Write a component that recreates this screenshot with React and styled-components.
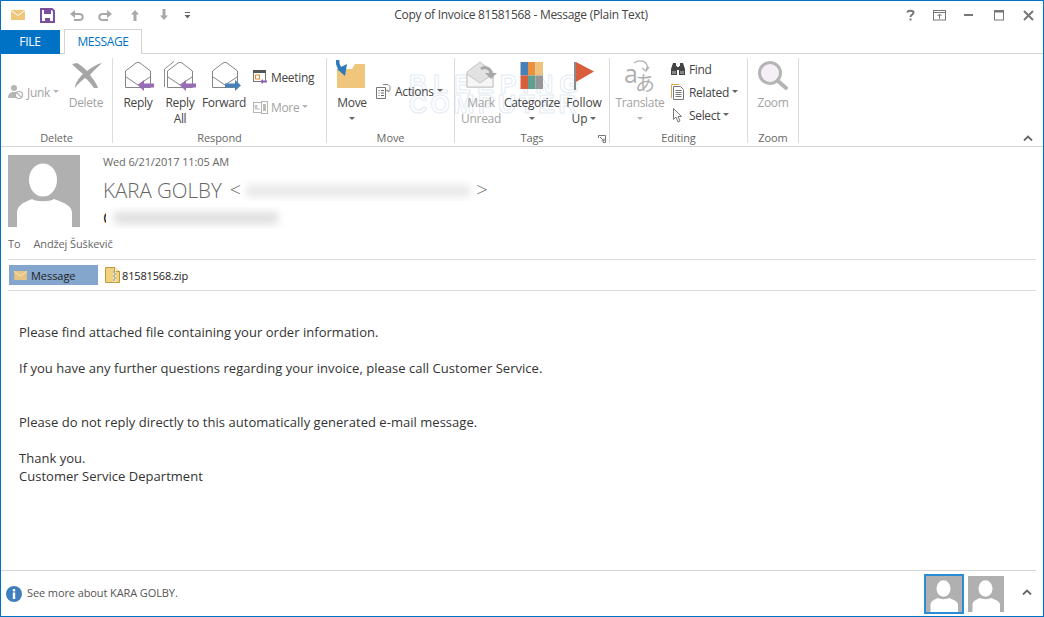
import React from "react";
import styled, { createGlobalStyle } from "styled-components";

const Global = createGlobalStyle`
  html, body { margin: 0; padding: 0; background: #fff; }
  body { font-family: "Open Sans", "Noto Sans", sans-serif; color: #444; }
  * { box-sizing: border-box; }
`;

const Win = styled.div`
  width: 1044px; height: 617px; border: 1px solid #0072c6;
  display: flex; flex-direction: column; overflow: hidden; background: #fff;
`;
const TitleBar = styled.div`
  height: 28px; flex: none; display: flex; align-items: center; position: relative;
`;
const Qat = styled.div`
  display: flex; align-items: center; padding-left: 10px;
`;
const QatBtn = styled.div`
  width: ${p => p.$w || 29}px; height: 16px; display: flex; align-items: center;
`;
const Title = styled.div`
  position: absolute; left: 0; right: 0; top: 6px; text-align: center; margin-left: -2px;
  font-size: 12px; line-height: 16px; color: #444; letter-spacing: -0.28px; pointer-events: none;
`;
const WinCtl = styled.div`
  margin-left: auto; display: flex; align-items: center;
`;
const CtlBtn = styled.div`
  width: 29.5px; height: 16px; display: flex; align-items: center; justify-content: center;
`;
const TabBar = styled.div`
  height: 25px; flex: none; display: flex; align-items: flex-end; border-bottom: 1px solid #d4d4d4; margin-left: -1px;
`;
const FileTab = styled.div`
  width: 60px; height: 24px; margin-bottom: -1px; background: #0072c6; color: #fff; font-size: 12px; line-height: 24px;
  text-align: center; letter-spacing: -0.2px;
`;
const MsgTab = styled.div`
  width: 78px; height: 25px; margin-left: 4px; margin-bottom: -1px; background: #fff; color: #0072c6;
  border: 1px solid #d4d4d4; border-bottom: 0; font-size: 12px; line-height: 24px; text-align: center; letter-spacing: -0.35px;
`;
const Ribbon = styled.div`
  height: 93px; flex: none; display: flex; position: relative; border-bottom: 1px solid #d4d4d4; padding-top: 4px;
`;
const Watermark = styled.div`
  position: absolute; left: 408px; top: 20px; font-family: "Liberation Sans", sans-serif; font-weight: 700;
  font-size: 25px; line-height: 20px; color: transparent; -webkit-text-stroke: 1px #e3ebf4; z-index: 0; white-space: nowrap;
  display: flex; flex-direction: column;
`;
const WatermarkLine = styled.span`
  letter-spacing: ${p => p.$ls}px;
`;
const Group = styled.div`
  width: ${p => p.$w}px; flex: none; height: 85px; position: relative; display: flex; flex-direction: column; z-index: 1;
  border-right: 1px solid #dcdcdc;
`;
const GroupBody = styled.div`
  flex: 1; display: flex; padding-left: ${p => p.$pl || 0}px; min-height: 0;
`;
const GroupLabel = styled.div`
  height: 16px; margin-bottom: -3px; flex: none; font-size: 11px; line-height: 16px; color: #666; text-align: center; letter-spacing: -0.1px;
`;
const Launcher = styled.div`
  position: absolute; right: 3px; bottom: 0; width: 8px; height: 8px; display: flex;
`;
const BigBtn = styled.div`
  width: ${p => p.$w}px; margin-left: ${p => p.$ml || 0}px; flex: none; display: flex; flex-direction: column; align-items: center;
  padding-top: 2px; font-size: 12px; line-height: 16px; letter-spacing: ${p => p.$ls ?? -0.33}px; text-align: center; white-space: nowrap;
  color: ${p => (p.$off ? "#a3a3a3" : "#444")};
`;
const BigIcon = styled.div`
  height: 34px; width: 100%; display: flex; justify-content: center; flex: none; margin-bottom: 1px;
`;
const BigLabel = styled.span`
  display: block;
`;
const CaretLine = styled.div`
  height: 16px; display: flex; align-items: center; justify-content: center;
`;
const Caret = styled.span`
  display: inline-block; width: 0; height: 0; border-left: 3px solid transparent; border-right: 3px solid transparent;
  border-top: 3px solid ${p => (p.$off ? "#b5b5b5" : "#666")}; margin-left: ${p => p.$ml ?? 3}px; vertical-align: middle; position: relative; top: -1px;
`;
const Stack = styled.div`
  display: flex; flex-direction: column; margin-left: ${p => p.$ml || 0}px; padding-top: ${p => p.$pt || 0}px; gap: ${p => p.$gap || 0}px; flex: none;
`;
const SmallBtn = styled.div`
  height: 16px; display: flex; align-items: center; font-size: 12px; letter-spacing: -0.33px; white-space: nowrap;
  color: ${p => (p.$off ? "#a3a3a3" : "#444")};
`;
const SmallIcon = styled.span`
  width: ${p => p.$w || 18}px; height: 16px; flex: none; display: flex; align-items: center; margin-right: ${p => p.$mr || 1}px;
`;
const Collapse = styled.div`
  position: absolute; right: 10px; bottom: 5px; width: 10px; height: 6px; display: flex;
`;
const Header = styled.div`
  flex: none; padding: 8px 7px 0 7px;
`;
const Top = styled.div`
  display: flex;
`;
const AvatarBox = styled.div`
  width: ${p => p.$s}px; height: ${p => p.$s}px; flex: none; background: #b0b0b0; overflow: hidden; display: flex;
`;
const Meta = styled.div`
  margin-left: 23px; display: flex; flex-direction: column; min-width: 0;
`;
const DateLine = styled.div`
  font-size: 11px; line-height: 14px; color: #666; letter-spacing: -0.12px;
`;
const NameRow = styled.div`
  margin-top: 7px; height: 28px; display: flex; align-items: center; font-size: 20.5px; line-height: 28px; color: #666; font-weight: 300; letter-spacing: 0;
`;
const Angle = styled.span`
  font-size: 20px; margin-left: ${p => p.$ml}px; color: #666;
`;
const BlurBox = styled.span`
  display: block; width: ${p => p.$w}px; height: ${p => p.$h}px; flex: none; margin-left: ${p => p.$ml || 0}px;
  background: #fff; overflow: hidden; position: relative;
`;
const BlurInk = styled.span`
  position: absolute; left: ${p => p.$l}px; right: ${p => p.$r}px; top: ${p => p.$t}px; height: ${p => p.$ih}px;
  background: ${p => p.$c}; filter: blur(4px);
`;
const SubjectRow = styled.div`
  margin-top: 3px; height: 22px; display: flex; align-items: center; font-size: 16px; color: #222;
`;
const ToRow = styled.div`
  margin-top: 8px; height: 14px; display: flex; font-size: 11px; line-height: 14px; color: #666; letter-spacing: -0.12px;
`;
const ToName = styled.span`
  margin-left: 13px;
`;
const Rule = styled.div`
  height: 1px; background: #dcdcdc; margin-top: ${p => p.$mt || 0}px;
`;
const AttachRow = styled.div`
  height: 30px; display: flex; align-items: center; padding-left: 1px;
`;
const MsgChip = styled.div`
  width: 89px; height: 20px; background: #84a6cc; display: flex; align-items: center; padding-left: 5px; font-size: 11px; color: #1f1f1f; letter-spacing: -0.05px;
`;
const ChipIcon = styled.span`
  display: flex; width: 13px; margin-right: 4px; flex: none;
`;
const Attachment = styled.div`
  display: flex; align-items: center; margin-left: 7px; font-size: 11px; color: #222; letter-spacing: -0.15px;
`;
const AttachIcon = styled.span`
  display: flex; margin-right: 2px;
`;
const Body = styled.div`
  flex: 1; min-height: 0; padding: 32px 0 0 18px; font-size: 13px; line-height: 18px; color: #333; letter-spacing: 0.03px;
`;
const Para = styled.p`
  margin: 0 0 ${p => p.$after ?? 18}px;
`;
const Footer = styled.div`
  height: 46px; flex: none; margin-left: -1px; margin-right: 7px; border-top: 1px solid #d4d4d4; display: flex; align-items: center; padding-left: 6px; position: relative;
`;
const FooterText = styled.div`
  margin: -2px 0 0 5px; font-size: 11px; color: #555; letter-spacing: -0.1px;
`;
const People = styled.div`
  margin-left: auto; display: flex; align-items: center; margin-right: 32px; gap: 4px;
`;
const Selected = styled.div`
  width: 40px; height: 40px; border: 2px solid #2a8dd4; display: flex;
`;
const FooterChevron = styled.div`
  position: absolute; right: 4px; top: 18px; width: 10px; height: 6px; display: flex;
`;

const Person = ({ s = 72 }) => (
  <AvatarBox $s={s}>
    <svg width={s} height={s} viewBox="0 0 72 72">
      <rect width="72" height="72" fill="#b0b0b0" />
      <ellipse cx="35" cy="25" rx="14" ry="16.5" fill="#fff" />
      <path d="M9 72V58c0-7 5-10 15-14 4 3 18 3 22 0 11 4 18 7 18 14v14z" fill="#fff" />
    </svg>
  </AvatarBox>
);

const Env = ({ x = 4, stroke = "#858585" }) => (
  <g fill="none" stroke={stroke} strokeWidth="1">
    <path d={`M${x + .5} 11 L${x + 11} 3 Q${x + 13} 1.500 ${x + 15} 3 L${x + 25.500} 11 V27.500 H${x + .5} Z`} fill="#fff" />
    <path d={`M${x + 1} 17 L${x + 13} 25 L${x + 25} 17`} />
  </g>
);
const ArrowL = ({ x, c = "#9a6cb8" }) => (
  <path d={`M${x} 25.500 l6 -5.500 v3.500 h10 v4 h-10 v3.500z`} fill={c} />
);

const ReplyIcon = () => (
  <svg width="34" height="34" viewBox="0 0 34 34"><Env /><ArrowL x={17} /></svg>
);
const ReplyAllIcon = () => (
  <svg width="34" height="34" viewBox="0 0 34 34">
    <path d="M1.500 27V9L11 1.500" fill="none" stroke="#8f8f8f" />
    <Env x={4} /><ArrowL x={17} />
  </svg>
);
const ForwardIcon = () => (
  <svg width="34" height="34" viewBox="0 0 34 34">
    <Env x={5} />
    <path d="M34 25.500 l-6 -5.500 v3.500 h-10 v4 h10 v3.500z" fill="#4a80b8" />
  </svg>
);
const DeleteIcon = () => (
  <svg width="34" height="34" viewBox="0 0 34 34">
    <path d="M3 4l5-1c4 2 7 5 10 8 5-4 10-7 15-8-4 4-9 8-12 12 3 4 7 9 8 13h-4c-3-4-6-8-9-10-4 3-8 7-10 10 0-5 4-10 8-14C10 11 6 7 3 4z" fill="#a6a6a6" />
  </svg>
);
const JunkIcon = () => (
  <svg width="18" height="16" viewBox="0 0 18 16">
    <circle cx="7" cy="4" r="3" fill="#b5b5b5" />
    <path d="M1 14c0-4 2-6 6-6s5 1 5 3l-2 3z" fill="#b5b5b5" />
    <circle cx="12" cy="11" r="3.500" fill="#fff" stroke="#b0b0b0" strokeWidth="1.200" />
    <path d="M9.700 8.700l4.600 4.600" stroke="#b0b0b0" strokeWidth="1.200" />
  </svg>
);
const MeetingIcon = () => (
  <svg width="16" height="16" viewBox="0 0 16 16">
    <rect x="1.500" y="1.500" width="12" height="11" fill="#fff" stroke="#777" />
    <rect x="1" y="1" width="13" height="3" fill="#555" />
    <rect x="3.500" y="6" width="4" height="4" fill="#fff" stroke="#e08a36" />
    <path d="M8 12.500l3-2.500v1.500h4v2h-4v1.500z" fill="#8e5fb0" />
  </svg>
);
const MoreIcon = () => (
  <svg width="17" height="16" viewBox="0 0 17 16" fill="none" stroke="#b5b5b5">
    <rect x="1.500" y="3.500" width="9" height="10" fill="#fff" />
    <path d="M3 6.500h2v2H3zM3 10h5" />
    <rect x="9.500" y="2.500" width="6" height="12" fill="#fff" />
    <rect x="11" y="5" width="3" height="7" fill="#bbb" stroke="none" />
  </svg>
);
const MoveIcon = () => (
  <svg width="32" height="34" viewBox="0 0 32 34">
    <path d="M1 28V9h15l3-5h10v24z" fill="#efc67c" />
    <path d="M1.500 0c0 5 1 8 4.500 9.500" fill="none" stroke="#2f79bd" strokeWidth="3.600" />
    <path d="M1 9l10-5-2 12z" fill="#2f79bd" />
  </svg>
);
const ActionsIcon = () => (
  <svg width="17" height="17" viewBox="0 0 17 17" fill="none" stroke="#777">
    <path d="M1.500 4.500h9v11h-9z" fill="#fff" />
    <path d="M3.500 7.500h1M6 7.500h3M3.500 10h1M6 10h3M3.500 12.500h1M6 12.500h3" stroke="#666" />
    <path d="M8 1.500h5l2 2v4l-2 1.500V7l-2 .5" stroke="#888" />
  </svg>
);
const UnreadIcon = () => (
  <svg width="34" height="34" viewBox="0 0 34 34">
    <path d="M3 12L16 2l13 10v15H3z" fill="#e2e2e2" stroke="#c4c4c4" />
    <path d="M3 14l13 9 13-9v13H3z" fill="#f6f6f6" stroke="#c4c4c4" />
    <path d="M17 9c4-3 10-1 10 5" fill="none" stroke="#a8a8a8" strokeWidth="3" />
    <path d="M21 13h12l-6 6z" fill="#a8a8a8" />
  </svg>
);
const CategorizeIcon = () => (
  <svg width="24" height="34" viewBox="0 0 24 34">
    <rect x="0.500" y="2" width="7.500" height="13.500" fill="#4a80b8" />
    <rect x="8" y="2" width="7.500" height="13.500" fill="#e8913f" />
    <rect x="15.500" y="2" width="7.500" height="13.500" fill="#eec27c" />
    <rect x="0.500" y="15.500" width="7.500" height="13.500" fill="#d95f3c" />
    <rect x="8" y="15.500" width="7.500" height="13.500" fill="#5f9e90" />
    <rect x="15.500" y="15.500" width="7.500" height="13.500" fill="#969696" />
  </svg>
);
const FlagIcon = () => (
  <svg width="22" height="34" viewBox="0 0 22 34">
    <rect x="1" y="2" width="2" height="28" fill="#8a8a8a" />
    <path d="M3 2l18 9.500L3 22z" fill="#d95f3c" />
  </svg>
);
const TranslateIcon = () => (
  <svg width="34" height="36" viewBox="0 0 34 36" overflow="visible">
    <text x="1" y="23" fontSize="25" fill="#b0b0b0" fontFamily="'Open Sans', sans-serif">a</text>
    <text x="12" y="31" fontSize="20" fill="#b0b0b0" fontFamily="'Noto Sans CJK JP', sans-serif">あ</text>
    <path d="M11 3c4-3 11-3 13 2 1 2 0 4-1 5" fill="none" stroke="#b5b5b5" strokeWidth="1.300" />
    <path d="M19 8l4 3 3-4" fill="none" stroke="#b5b5b5" strokeWidth="1.300" />
  </svg>
);
const FindIcon = () => (
  <svg width="16" height="14" viewBox="0 0 16 14" fill="#444">
    <path d="M3 1h3v3h1v9H1V7zM10 1h3l2 6v6H9V4h1z" />
    <rect x="7" y="5" width="2" height="3" />
    <rect x="2" y="9" width="4" height="3" fill="#888" />
    <rect x="10" y="9" width="4" height="3" fill="#888" />
  </svg>
);
const RelatedIcon = () => (
  <svg width="15" height="16" viewBox="0 0 15 16" fill="none">
    <path d="M1.500 14V.5h8" stroke="#e3a450" />
    <path d="M3.500 2.500h7l3 3v10h-10z" fill="#fff" stroke="#777" />
    <path d="M5.500 6.500h6M5.500 8.500h6M5.500 10.500h6M5.500 12.500h6" stroke="#777" />
  </svg>
);
const SelectIcon = () => (
  <svg width="14" height="17" viewBox="0 0 14 17">
    <path d="M3.500 1.500v11l2.500-2.500 2 5 2-1-2-4.500h3.500z" fill="#fff" stroke="#777" />
  </svg>
);
const ZoomIcon = () => (
  <svg width="32" height="34" viewBox="0 0 32 34">
    <circle cx="13" cy="13" r="10.500" fill="#f4f0f6" stroke="#b5b5b5" strokeWidth="3" />
    <path d="M21 21l8 7" stroke="#b5b5b5" strokeWidth="4" strokeLinecap="round" />
  </svg>
);
const Chevron = () => (
  <svg width="10" height="6" viewBox="0 0 10 6"><path d="M1 5.500l4-4 4 4" fill="none" stroke="#666" strokeWidth="1.800" /></svg>
);
const MailSmall = ({ w = 14, h = 10, c = "#efc67c", line = "#fff" }) => (
  <svg width={w} height={h} viewBox="0 0 14 10">
    <rect width="14" height="10" fill={c} />
    <path d="M0 .5l7 5 7-5" fill="none" stroke={line} />
  </svg>
);
const Zip = () => (
  <svg width="15" height="16" viewBox="0 0 15 16">
    <path d="M.5.500h9l5 4v11H.5z" fill="#f1d27e" stroke="#b99a3c" />
    <path d="M9.500.5v4h5" fill="#fff7d8" stroke="#b99a3c" />
    <rect x="8" y="4" width="3" height="11" fill="#fff" opacity=".6" />
    <path d="M8 5h2M9 7h2M8 9h2M9 11h2M8 13h2" stroke="#777" />
  </svg>
);
const Info = () => (
  <svg width="16" height="16" viewBox="0 0 16 16">
    <circle cx="8" cy="8" r="8" fill="#3f7fbe" />
    <rect x="6.800" y="3" width="2.400" height="2.400" fill="#fff" />
    <rect x="6.800" y="6.500" width="2.400" height="6.500" fill="#fff" />
  </svg>
);

export default function App() {
  return (
    <>
      <Global />
      <Win>
        <TitleBar>
          <Qat>
            <QatBtn><MailSmall w={14} h={10} /></QatBtn>
            <QatBtn>
              <svg width="15" height="15" viewBox="0 0 15 15">
                <path d="M1 1h11l2 2v11H1z" fill="none" stroke="#7c4f9e" strokeWidth="2" />
                <rect x="4" y="2" width="7" height="4" fill="#7c4f9e" />
                <rect x="5" y="10" width="5" height="4" fill="#7c4f9e" />
              </svg>
            </QatBtn>
            <QatBtn>
              <svg width="15" height="13" viewBox="0 0 15 13">
                <path d="M4 5h6c5 0 5 6 0 6H5" fill="none" stroke="#a8a8a8" strokeWidth="2" />
                <path d="M1 5l5-4v8z" fill="#a8a8a8" />
              </svg>
            </QatBtn>
            <QatBtn $w={32}>
              <svg width="15" height="13" viewBox="0 0 15 13">
                <path d="M11 5H5c-5 0-5 6 0 6h5" fill="none" stroke="#a8a8a8" strokeWidth="2" />
                <path d="M14 5L9 1v8z" fill="#a8a8a8" />
              </svg>
            </QatBtn>
            <QatBtn>
              <svg width="10" height="12" viewBox="0 0 10 12"><path d="M5 1L1 5.500h2.500V12h3V5.500H9z" fill="#a8a8a8" /></svg>
            </QatBtn>
            <QatBtn $w={25}>
              <svg width="10" height="12" viewBox="0 0 10 12"><path d="M5 11L1 6.500h2.500V0h3v6.500H9z" fill="#a8a8a8" /></svg>
            </QatBtn>
            <QatBtn>
              <svg width="7" height="7" viewBox="0 0 7 7"><path d="M1 .5h5" stroke="#666" /><path d="M.5 3h6L3.500 6.500z" fill="#666" /></svg>
            </QatBtn>
          </Qat>
          <Title>Copy of Invoice 81581568 - Message (Plain Text)</Title>
          <WinCtl>
            <CtlBtn>
              <svg width="9" height="12" viewBox="0 0 9 12"><path d="M1.500 3.500C1.500 1 7.500 1 7.500 3.500c0 2.500-3 2-3 4.500" fill="none" stroke="#777" strokeWidth="2" /><rect x="3.500" y="9.500" width="2" height="2" fill="#777" /></svg>
            </CtlBtn>
            <CtlBtn>
              <svg width="13" height="11" viewBox="0 0 13 11" fill="none" stroke="#777"><rect x=".5" y=".5" width="12" height="9.500" /><path d="M.5 2.500h12" /><path d="M6.500 9V4M4.500 6l2-2 2 2" /></svg>
            </CtlBtn>
            <CtlBtn>
              <svg width="10" height="2" viewBox="0 0 10 2"><rect width="9" height="2" fill="#777" /></svg>
            </CtlBtn>
            <CtlBtn>
              <svg width="10" height="11" viewBox="0 0 10 11" fill="none" stroke="#777"><rect x=".5" y=".5" width="9" height="9.500" /><rect x="0" y="0" width="10" height="2.500" fill="#777" stroke="none" /></svg>
            </CtlBtn>
            <CtlBtn>
              <svg width="11" height="11" viewBox="0 0 11 11"><path d="M1 1l9 9M10 1l-9 9" stroke="#777" strokeWidth="2" /></svg>
            </CtlBtn>
          </WinCtl>
        </TitleBar>
        <TabBar>
          <FileTab>FILE</FileTab>
          <MsgTab>MESSAGE</MsgTab>
        </TabBar>
        <Ribbon>
          <Watermark>
            <WatermarkLine $ls={6}>BLEEPING</WatermarkLine>
            <WatermarkLine $ls={3.5}>COMPUTER</WatermarkLine>
          </Watermark>
          <Group $w={112}>
            <GroupBody $pl={6}>
              <Stack $pt={26}>
                <SmallBtn $off><SmallIcon $w={19}><JunkIcon /></SmallIcon>Junk<Caret $off /></SmallBtn>
              </Stack>
              <BigBtn $w={34} $ml={10} $off><BigIcon><DeleteIcon /></BigIcon>Delete</BigBtn>
            </GroupBody>
            <GroupLabel>Delete</GroupLabel>
          </Group>
          <Group $w={214}>
            <GroupBody $pl={6}>
              <BigBtn $w={38}><BigIcon><ReplyIcon /></BigIcon><BigLabel>Reply</BigLabel></BigBtn>
              <BigBtn $w={46}><BigIcon><ReplyAllIcon /></BigIcon><BigLabel>Reply<br />All</BigLabel></BigBtn>
              <BigBtn $w={42}><BigIcon><ForwardIcon /></BigIcon><BigLabel>Forward</BigLabel></BigBtn>
              <Stack $ml={7} $pt={11} $gap={14}>
                <SmallBtn><SmallIcon $w={18}><MeetingIcon /></SmallIcon>Meeting</SmallBtn>
                <SmallBtn $off><SmallIcon $w={18}><MoreIcon /></SmallIcon>More<Caret $off /></SmallBtn>
              </Stack>
            </GroupBody>
            <GroupLabel>Respond</GroupLabel>
          </Group>
          <Group $w={128}>
            <GroupBody $pl={8}>
              <BigBtn $w={34}><BigIcon><MoveIcon /></BigIcon><BigLabel>Move</BigLabel><CaretLine><Caret $ml={0} /></CaretLine></BigBtn>
              <Stack $ml={6} $pt={25}>
                <SmallBtn><SmallIcon $w={19}><ActionsIcon /></SmallIcon>Actions<Caret /></SmallBtn>
              </Stack>
            </GroupBody>
            <GroupLabel>Move</GroupLabel>
          </Group>
          <Group $w={155}>
            <GroupBody $pl={5}>
              <BigBtn $w={42} $off><BigIcon><UnreadIcon /></BigIcon><BigLabel>Mark<br />Unread</BigLabel></BigBtn>
              <BigBtn $w={60}><BigIcon><CategorizeIcon /></BigIcon><BigLabel>Categorize</BigLabel><CaretLine><Caret $ml={0} /></CaretLine></BigBtn>
              <BigBtn $w={38} $ml={3} $ls={-0.05}><BigIcon><FlagIcon /></BigIcon><BigLabel>Follow<br />Up<Caret /></BigLabel></BigBtn>
            </GroupBody>
            <GroupLabel>Tags</GroupLabel>
            <Launcher>
              <svg width="8" height="8" viewBox="0 0 8 8" fill="none" stroke="#777"><path d="M.5 3V.5H7.500V7.500H5" /><path d="M2 2l4 4M3.500 6H6V3.500" /></svg>
            </Launcher>
          </Group>
          <Group $w={138}>
            <GroupBody $pl={5}>
              <BigBtn $w={50} $off><BigIcon><TranslateIcon /></BigIcon><BigLabel>Translate</BigLabel><CaretLine><Caret $off $ml={0} /></CaretLine></BigBtn>
              <Stack $ml={5} $pt={3} $gap={7}>
                <SmallBtn><SmallIcon $w={18}><FindIcon /></SmallIcon>Find</SmallBtn>
                <SmallBtn><SmallIcon $w={18}><RelatedIcon /></SmallIcon>Related<Caret /></SmallBtn>
                <SmallBtn><SmallIcon $w={18}><SelectIcon /></SmallIcon>Select<Caret /></SmallBtn>
              </Stack>
            </GroupBody>
            <GroupLabel>Editing</GroupLabel>
          </Group>
          <Group $w={51}>
            <GroupBody $pl={8}>
              <BigBtn $w={34} $off><BigIcon><ZoomIcon /></BigIcon><BigLabel>Zoom</BigLabel></BigBtn>
            </GroupBody>
            <GroupLabel>Zoom</GroupLabel>
          </Group>
          <Collapse><Chevron /></Collapse>
        </Ribbon>
        <Header>
          <Top>
            <Person s={72} />
            <Meta>
              <DateLine>Wed 6/21/2017 11:05 AM</DateLine>
              <NameRow>
                KARA GOLBY
                <Angle $ml={8}>&lt;</Angle>
                <BlurBox $w={232} $h={21} $ml={1}>
                  <BlurInk $l={4} $r={4} $t={5} $ih={12} $c="#e8e8e8" />
                </BlurBox>
                <Angle $ml={2}>&gt;</Angle>
              </NameRow>
              <SubjectRow>
                C
                <BlurBox $w={182} $h={22} $ml={-7}>
                  <BlurInk $l={8} $r={10} $t={5} $ih={12} $c="#dedede" />
                </BlurBox>
              </SubjectRow>
            </Meta>
          </Top>
          <ToRow>To<ToName>Andžej Šuškevič</ToName></ToRow>
          <Rule $mt={8} />
          <AttachRow>
            <MsgChip><ChipIcon><MailSmall w={13} h={9} c="#e9c382" line="#f6e6c4" /></ChipIcon>Message</MsgChip>
            <Attachment><AttachIcon><Zip /></AttachIcon>81581568.zip</Attachment>
          </AttachRow>
          <Rule />
        </Header>
        <Body>
          <Para>Please find attached file containing your order information.</Para>
          <Para $after={36}>If you have any further questions regarding your invoice, please call Customer Service.</Para>
          <Para>Please do not reply directly to this automatically generated e-mail message.</Para>
          <Para $after={0}>Thank you.</Para>
          <Para $after={0}>Customer Service Department</Para>
        </Body>
        <Footer>
          <Info />
          <FooterText>See more about KARA GOLBY.</FooterText>
          <People>
            <Selected><Person s={36} /></Selected>
            <Person s={36} />
          </People>
          <FooterChevron><Chevron /></FooterChevron>
        </Footer>
      </Win>
    </>
  );
}
